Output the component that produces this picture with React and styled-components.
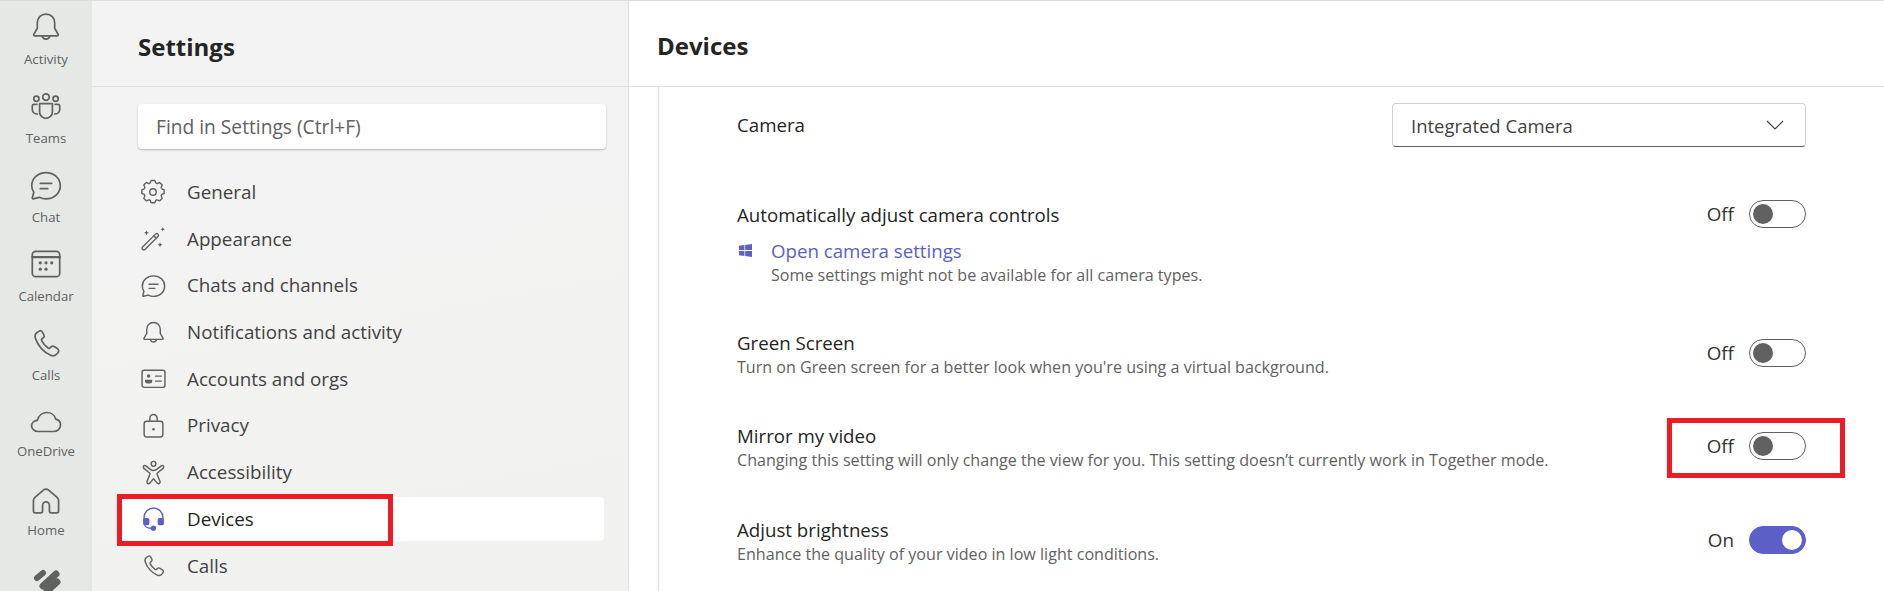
import React from "react";
import styled, { createGlobalStyle } from "styled-components";

const GlobalStyle = createGlobalStyle`
  html, body {
    margin: 0;
    padding: 0;
    height: 591px;
    overflow: hidden;
    background: #ffffff;
    font-family: "Open Sans", "Noto Sans", "Liberation Sans", sans-serif;
  }
`;

const Icon = styled.svg.attrs({ fill: "none", strokeLinecap: "round", strokeLinejoin: "round" })`
  width: ${(p) => p.$size || 32}px;
  height: ${(p) => p.$size || 32}px;
  flex: none;
  stroke: ${(p) => p.$color || "#616161"};
  stroke-width: ${(p) => p.$stroke || 1.5};
`;

const BellIcon = (props) => (
  <Icon viewBox="0 2.300 28 28" {...props}>
    <path d="M14 5c-4.600 0-7.600 3.400-7.600 7.800v4.600L3.400 22.600c-.4.800 0 1.400.8 1.400h19.600c.8 0 1.200-.6.8-1.400l-3-5.200v-4.600C21.600 8.400 18.600 5 14 5z" />
    <path d="M10.600 24.200a3.500 3.500 0 0 0 6.800 0" />
  </Icon>
);

const TeamsIcon = (props) => (
  <Icon viewBox="0 1.400 28 28" {...props}>
    <circle cx="14" cy="7.600" r="2.900" />
    <circle cx="5.600" cy="9" r="2.300" />
    <circle cx="22.400" cy="9" r="2.300" />
    <path d="M8.400 13.400h11.200v7.200a5.600 5.600 0 0 1-11.200 0z" />
    <path d="M6 14H3.400c-.9 0-1.400.5-1.400 1.300v2.900c0 2.500 1.900 4.200 4.400 4.200" />
    <path d="M22 14h2.600c.9 0 1.400.5 1.400 1.300v2.900c0 2.500-1.900 4.200-4.400 4.200" />
  </Icon>
);

const ChatIcon = (props) => (
  <Icon viewBox="0 .8 28 28" {...props}>
    <path d="M14 4c7 0 12.500 5 12.500 11.500S21 27 14 27c-2.100 0-4.100-.5-5.800-1.400L2.800 26.900c-.5.100-.9-.3-.8-.8l1.300-5C2.300 19.500 1.500 17.500 1.500 15.500 1.500 9 7 4 14 4z" />
    <path d="M9 13.300h10M9 18h6.500" />
  </Icon>
);

const CalendarIcon = (props) => (
  <Icon viewBox="0 2 28 28" {...props}>
    <rect x="2" y="5" width="24" height="22" rx="3" />
    <path d="M2 10h24" strokeWidth="2" />
    <g fill={props.$color || "#616161"} stroke="none">
      <circle cx="9" cy="15" r="1.400" />
      <circle cx="14" cy="15" r="1.400" />
      <circle cx="19" cy="15" r="1.400" />
      <circle cx="9" cy="20.500" r="1.400" />
      <circle cx="14" cy="20.500" r="1.400" />
    </g>
  </Icon>
);

const PhoneIcon = (props) => (
  <Icon viewBox="0 1 28 28" {...props}>
    <path d="M8 4.600 6 6c-1.600 1.200-1.900 3.200-1.200 5.200 1 3 2.800 6 5.200 8.700 2.400 2.600 5 4.500 8 5.800 2.200.9 4.400.4 5.700-1.300l1-1.400c.7-1 .5-2.200-.5-2.900l-3-2c-.9-.6-2-.4-2.800.3l-.9.9c-.5.5-1.100.5-1.700.1-2.400-1.700-4.300-3.900-5.600-6.500-.3-.6-.2-1.200.3-1.600l1-.8c.8-.7 1.100-1.800.6-2.800L10.700 5.300C10.200 4.200 9 3.900 8 4.600z" />
  </Icon>
);

const CloudIcon = (props) => (
  <Icon viewBox="0 1.700 28 28" {...props}>
    <path d="M7 24c-3 0-5.600-2.200-5.600-4.900 0-2.600 2.200-4.700 5-4.900C7.500 10.200 10.800 7.400 14.800 7.400c3.700 0 6.800 2.400 7.700 5.800 2.400.5 4.200 2.500 4.200 5 0 3.200-2.700 5.800-6 5.800z" />
  </Icon>
);

const HomeIcon = (props) => (
  <Icon viewBox="0 .7 28 28" {...props}>
    <path d="M11.700 5.200 4.300 11.500c-.8.700-1.300 1.700-1.300 2.800v9.200c0 .8.700 1.500 1.500 1.500h5c.8 0 1.500-.7 1.500-1.500v-5c0-1.600 1.400-3 3-3s3 1.400 3 3v5c0 .8.700 1.500 1.500 1.500h5c.8 0 1.500-.7 1.500-1.500v-9.200c0-1.100-.5-2.100-1.300-2.800l-7.400-6.300c-1.300-1.100-3.300-1.100-4.600 0z" />
  </Icon>
);

const LogoIcon = (props) => (
  <Icon viewBox="0 0 32 32" {...props} $stroke={6}>
    <path d="M7 14 13 9" />
    <path d="M13 22 26 10" strokeWidth="7" />
    <path d="M17 27 27 18" strokeWidth="7" />
  </Icon>
);

const GearIcon = (props) => (
  <Icon viewBox="0 0 24 24" {...props}>
    <path d="M9.670 3.100 10.300 1.400h3.400l.63 1.700c.15.400.47.700.880.900.41.180.860.150 1.270-.05l1.640-.780 2.400 2.400-.780 1.640c-.2.410-.23.860-.05 1.270.2.410.5.730.9.880l1.700.630v3.400l-1.700.63c-.4.150-.7.470-.9.880-.18.410-.15.860.05 1.270l.780 1.640-2.400 2.400-1.640-.780c-.41-.2-.860-.23-1.270-.05-.41.2-.730.5-.880.9l-.63 1.700h-3.400l-.63-1.700c-.15-.4-.47-.7-.880-.9-.41-.18-.860-.15-1.270.05l-1.640.780-2.400-2.400.780-1.640c.2-.41.23-.860.05-1.270-.2-.41-.5-.730-.9-.880l-1.700-.63v-3.400l1.700-.63c.4-.15.7-.47.9-.880.18-.41.15-.860-.05-1.270l-.780-1.640 2.400-2.400 1.640.780c.41.2.860.23 1.270.05.41-.2.730-.5.880-.9z" />
    <circle cx="12" cy="12" r="3" />
  </Icon>
);

const WandIcon = (props) => (
  <Icon viewBox="0 0 24 24" {...props}>
    <path d="M2.200 19.600 14.300 7.500c.7-.7 1.700-.7 2.300 0 .6.600.6 1.600 0 2.200L4.500 21.800c-.5.500-1.300.500-1.800 0l-.5-.5c-.5-.5-.5-1.200 0-1.700z" />
    <path d="m12.800 9 2.300 2.300" />
    <g fill={props.$color || "#616161"} stroke="none">
      <path d="m6 4 .7 1.600L8.300 6.300l-1.600.7L6 8.600 5.300 7 3.700 6.300l1.600-.7z" />
      <path d="m21 1 .6 1.400L23 3l-1.400.6L21 5l-.6-1.400L19 3l1.400-.6z" />
      <path d="m18.500 15 .7 1.600 1.600.7-1.600.7-.7 1.600-.7-1.600-1.600-.7 1.600-.7z" />
    </g>
  </Icon>
);

const CardIcon = (props) => (
  <Icon viewBox="0 0 24 24" {...props}>
    <rect x="1" y="4" width="22" height="16.500" rx="2" />
    <circle cx="7.300" cy="9.500" r="1.700" fill={props.$color || "#616161"} stroke="none" />
    <path d="M3.800 13.300h7v1.300c0 1.500-1.500 2.300-3.500 2.300s-3.500-.8-3.500-2.300z" fill={props.$color || "#616161"} stroke="none" />
    <path d="M14 9.700h5.500M14 14.500h5.500" />
  </Icon>
);

const LockIcon = (props) => (
  <Icon viewBox="0 0 24 24" {...props}>
    <rect x="3" y="8" width="18" height="15" rx="2.500" />
    <path d="M8.500 8V5a3.500 3.500 0 0 1 7 0v3" />
    <circle cx="12" cy="15.500" r="1.200" fill={props.$color || "#616161"} stroke="none" />
  </Icon>
);

const AccessIcon = (props) => (
  <Icon viewBox="0 0 24 24" {...props}>
    <circle cx="12" cy="3.600" r="2.300" />
    <path d="M3 5.500c-1 .6-1 1.800-.2 2.500l5.200 4.200c.5.5.7 1 .5 1.700L5.800 20.500c-.6 1.500 1.200 3 2.600 1.700L12 18l3.600 4.200c1.400 1.300 3.200-.2 2.600-1.700L15.500 13.900c-.2-.7 0-1.200.5-1.700L21.200 8c.8-.7.8-1.900-.2-2.500-.5-.3-1.100-.2-1.600.2L15 9c-1.800 1.300-4.200 1.300-6 0L4.600 5.700C4.100 5.300 3.500 5.200 3 5.500z" />
  </Icon>
);

const HeadsetIcon = (props) => (
  <Icon viewBox="0 0 24 24" {...props}>
    <path d="M3 14V11a9 9 0 0 1 18 0v3" />
    <path d="M3.500 17.500c0 2.500 3 3.800 6 3.800" />
    <g fill={props.$color || "#5b5fc7"} stroke="none">
      <rect x="2" y="11.500" width="6" height="7" rx="1.800" />
      <rect x="16" y="11.500" width="6" height="7" rx="1.800" />
      <circle cx="12" cy="21.300" r="2.500" />
    </g>
  </Icon>
);

const WinSvg = styled.svg`
  width: 13px;
  height: 13px;
  fill: #5b5fc7;
  flex: none;
`;

const WindowsIcon = () => (
  <WinSvg viewBox="0 0 12 12">
    <path d="M0 1.700 5 1v4.600H0zM5.700.9 12 0v5.600H5.700zM0 6.400h5V11L0 10.300zM5.700 6.400H12V12l-6.300-.9z" />
  </WinSvg>
);

const railItems = [
  { label: "Activity", icon: BellIcon },
  { label: "Teams", icon: TeamsIcon },
  { label: "Chat", icon: ChatIcon },
  { label: "Calendar", icon: CalendarIcon },
  { label: "Calls", icon: PhoneIcon },
  { label: "OneDrive", icon: CloudIcon, tight: true },
  { label: "Home", icon: HomeIcon, tight: true },
  { label: "", icon: LogoIcon },
];

const navItems = [
  { label: "General", icon: GearIcon, size: 26, stroke: 1.300 },
  { label: "Appearance", icon: WandIcon, size: 26, stroke: 1.300 },
  { label: "Chats and channels", icon: ChatIcon, size: 25, stroke: 1.600 },
  { label: "Notifications and activity", icon: BellIcon, size: 25, stroke: 1.600 },
  { label: "Accounts and orgs", icon: CardIcon, size: 25, stroke: 1.400 },
  { label: "Privacy", icon: LockIcon, size: 25, stroke: 1.400 },
  { label: "Accessibility", icon: AccessIcon, size: 25, stroke: 1.400 },
  { label: "Devices", icon: HeadsetIcon, size: 25, stroke: 1.400, active: true },
  { label: "Calls", icon: PhoneIcon, size: 25, stroke: 1.600 },
];

const App = () => {
  return (
    <Page>
      <GlobalStyle />
      <Rail>
        {railItems.map((item) => (
          <RailItem key={item.label || "logo"} $tight={item.tight}>
            <item.icon $size={32} $stroke={1.500} />
            {item.label && <RailLabel>{item.label}</RailLabel>}
          </RailItem>
        ))}
      </Rail>

      <Sidebar>
        <SideHeader>Settings</SideHeader>
        <Search>Find in Settings (Ctrl+F)</Search>
        <Nav>
          {navItems.map((item) => (
            <NavItem key={item.label} $active={item.active}>
              <NavGlyph>
                <item.icon $size={item.size} $stroke={item.stroke} $color={item.active ? "#5b5fc7" : "#616161"} />
              </NavGlyph>
              <span>{item.label}</span>
              {item.active && <RedBox />}
            </NavItem>
          ))}
        </Nav>
      </Sidebar>

      <Main>
        <MainHeader>Devices</MainHeader>
        <Content>
          <CameraRow>
            <RowTitle>Camera</RowTitle>
            <Select>
              Integrated Camera
              <svg width="18" height="10" viewBox="0 0 18 10" fill="none" stroke="#424242" strokeWidth="1.200">
                <path d="m1 1 8 8 8-8" />
              </svg>
            </Select>
          </CameraRow>

          <SettingRow $top={56}>
            <div>
              <RowTitle>Automatically adjust camera controls</RowTitle>
              <LinkLine>
                <WindowsIcon />
                <div>
                  <SettingsLink>Open camera settings</SettingsLink>
                  <RowSub>Some settings might not be available for all camera types.</RowSub>
                </div>
              </LinkLine>
            </div>
            <ToggleGroup label="Off" top={-3} />
          </SettingRow>

          <SettingRow $top={44}>
            <div>
              <RowTitle>Green Screen</RowTitle>
              <RowSub>Turn on Green screen for a better look when you're using a virtual background.</RowSub>
            </div>
            <ToggleGroup label="Off" top={8} />
          </SettingRow>

          <SettingRow $top={45}>
            <div>
              <RowTitle>Mirror my video</RowTitle>
              <RowSub>Changing this setting will only change the view for you. This setting doesn’t currently work in Together mode.</RowSub>
            </div>
            <ToggleGroup label="Off" top={8} boxed />
          </SettingRow>

          <SettingRow $top={46}>
            <div>
              <RowTitle>Adjust brightness</RowTitle>
              <RowSub>Enhance the quality of your video in low light conditions.</RowSub>
            </div>
            <ToggleGroup label="On" top={8} on />
          </SettingRow>
        </Content>
      </Main>
    </Page>
  );
};

const ToggleGroup = ({ label, on, boxed, top }) => (
  <ToggleWrap $top={top}>
    <ToggleText>{label}</ToggleText>
    <Track $on={on}>
      <Knob $on={on} />
    </Track>
    {boxed && <RedBoxToggle />}
  </ToggleWrap>
);

const Page = styled.div`
  display: grid;
  grid-template-columns: 92px 537px 1fr;
  height: 591px;
  overflow: hidden;
  color: #242424;
`;

const Rail = styled.div`
  background: #e6e8e6;
  border-top: 1px solid #dcdcdc;
  padding-top: 10px;
  overflow: hidden;
`;

const RailItem = styled.div`
  height: 79px;
  display: flex;
  flex-direction: column;
  align-items: center;
  gap: ${(p) => (p.$tight ? 5 : 8)}px;
`;

const RailLabel = styled.div`
  font-size: 13.200px;
  line-height: 16px;
  color: #616161;
`;

const Sidebar = styled.div`
  background: linear-gradient(170deg, #f3f3f3 30%, #f1f1ef 100%);
  border-top: 1px solid #dcdcdc;
  border-right: 1px solid #e0e0e0;
  overflow: hidden;
`;

const SideHeader = styled.div`
  height: 86px;
  box-sizing: border-box;
  border-bottom: 1px solid #e0e0e0;
  padding: 30px 0 0 46px;
  font-size: 24px;
  line-height: 32px;
  font-weight: 700;
  color: #242424;
`;

const Search = styled.div`
  margin: 17px 22px 0 46px;
  height: 45px;
  padding-left: 18px;
  background: #ffffff;
  border-radius: 4px;
  box-shadow: 0 1px 2px rgba(0, 0, 0, 0.25);
  font-size: 19.200px;
  line-height: 45px;
  color: #616161;
`;

const Nav = styled.div`
  margin-top: 21px;
  display: flex;
  flex-direction: column;
`;

const NavItem = styled.div`
  position: relative;
  height: 44px;
  margin: 0 24px 2.700px 27px;
  padding-left: 22px;
  display: flex;
  align-items: center;
  gap: 22px;
  border-radius: 4px;
  font-size: 18.800px;
  color: ${(p) => (p.$active ? "#242424" : "#424242")};
  background: ${(p) => (p.$active ? "#ffffff" : "transparent")};
`;

const NavGlyph = styled.div`
  width: 24px;
  height: 26px;
  display: flex;
  align-items: center;
  justify-content: center;
`;

const RedBox = styled.div`
  position: absolute;
  left: -2px;
  top: -3px;
  width: 276px;
  height: 52px;
  box-sizing: border-box;
  border: 5px solid #ed1c24;
`;

const Main = styled.div`
  display: flex;
  flex-direction: column;
  border-top: 1px solid #dcdcdc;
  overflow: hidden;
`;

const MainHeader = styled.div`
  height: 86px;
  flex: none;
  box-sizing: border-box;
  border-bottom: 1px solid #e0e0e0;
  padding: 29px 0 0 28px;
  font-size: 24px;
  line-height: 32px;
  font-weight: 700;
`;

const Content = styled.div`
  flex: 1;
  margin-left: 29px;
  padding: 0 78px 0 78px;
  border-left: 1px solid #e0e0e0;
`;

const CameraRow = styled.div`
  padding-top: 16px;
  display: flex;
  align-items: center;
  justify-content: space-between;
`;

const RowTitle = styled.div`
  font-size: 18.700px;
  line-height: 24px;
  color: #242424;
`;

const RowSub = styled.div`
  font-size: 16.100px;
  line-height: 24px;
  color: #616161;
`;

const Select = styled.div`
  width: 414px;
  height: 44px;
  box-sizing: border-box;
  padding: 0 21px 0 18px;
  display: flex;
  align-items: center;
  justify-content: space-between;
  background: #ffffff;
  border: 1px solid #d1d1d1;
  border-bottom-color: #616161;
  border-radius: 4px;
  font-size: 18.500px;
  color: #424242;
`;

const SettingRow = styled.div`
  margin-top: ${(p) => p.$top}px;
  display: flex;
  justify-content: space-between;
  align-items: flex-start;
`;

const LinkLine = styled.div`
  margin-top: 12px;
  margin-left: 2px;
  display: flex;
  gap: 19px;
  svg {
    margin-top: 5px;
  }
`;

const SettingsLink = styled.div`
  font-size: 18.700px;
  line-height: 24px;
  color: #5b5fc7;
`;

const ToggleWrap = styled.div`
  position: relative;
  margin-top: ${(p) => p.$top}px;
  display: flex;
  align-items: center;
  gap: 15px;
`;

const ToggleText = styled.div`
  font-size: 18.800px;
  color: #333333;
`;

const Track = styled.div`
  width: 57px;
  height: 28px;
  box-sizing: border-box;
  padding: 0 3px;
  display: flex;
  align-items: center;
  justify-content: ${(p) => (p.$on ? "flex-end" : "flex-start")};
  border-radius: 14px;
  background: ${(p) => (p.$on ? "#5b5fc7" : "#ffffff")};
  border: 1px solid ${(p) => (p.$on ? "#5b5fc7" : "#616161")};
`;

const Knob = styled.div`
  width: 20px;
  height: 20px;
  border-radius: 50%;
  background: ${(p) => (p.$on ? "#ffffff" : "#616161")};
`;

const RedBoxToggle = styled.div`
  position: absolute;
  right: -39px;
  top: -14px;
  width: 178px;
  height: 60px;
  box-sizing: border-box;
  border: 5px solid #ed1c24;
`;

export default App;
